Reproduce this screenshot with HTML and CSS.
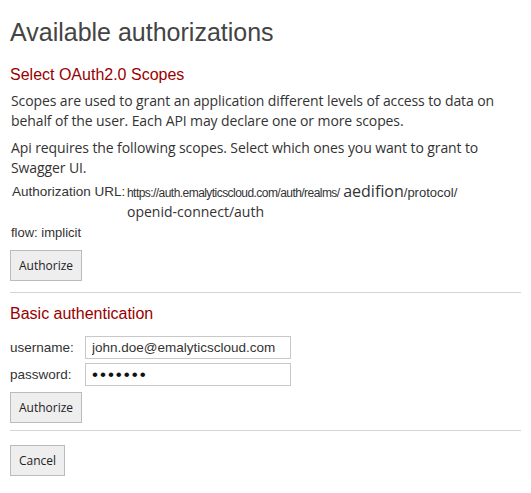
FILE: index.html
```html
<!DOCTYPE html>
<html>
<head>
<meta charset="utf-8">
<link rel="stylesheet" href="styles.css">
</head>
<body>
<div class="dialog">
  <h2 class="title">Available authorizations</h2>
  <section class="block">
    <h3 class="heading">Select OAuth2.0 Scopes</h3>
    <p class="text">Scopes are used to grant an application different levels of access to data on behalf of the user. Each API may declare one or more scopes.</p>
    <p class="text">Api requires the following scopes. Select which ones you want to grant to Swagger UI.</p>
    <div class="url-row">
      <span class="url-label">Authorization URL:</span>
      <span class="url-value"><span class="url-main">https://auth.emalyticscloud.com/auth/realms/</span> <span class="alt">aedifion</span>/protocol/<br><span class="alt alt-line">openid-connect/auth</span></span>
    </div>
    <div class="flow">flow: implicit</div>
    <button class="btn btn-oauth">Authorize</button>
  </section>
  <hr class="rule">
  <section class="block">
    <h3 class="heading heading-basic">Basic authentication</h3>
    <div class="form">
      <label class="lbl">username:</label>
      <input class="field" type="text" value="john.doe@emalyticscloud.com">
      <label class="lbl">password:</label>
      <input class="field pw" type="password" value="1234567">
    </div>
    <button class="btn btn-basic">Authorize</button>
  </section>
  <hr class="rule rule-2">
  <button class="btn btn-cancel">Cancel</button>
</div>
</body>
</html>
```
FILE: styles.css
```css
html, body {
  margin: 0;
  padding: 0;
  background: #ffffff;
}
.dialog {
  padding: 18px 10px 0 10px;
  font-family: "Liberation Sans", Arial, sans-serif;
  color: #333333;
}
.title {
  margin: 0;
  font-size: 25px;
  line-height: 29px;
  font-weight: normal;
  color: #444444;
}
.block {
  display: flex;
  flex-direction: column;
  align-items: flex-start;
}
.heading {
  margin: 18px 0 0 0;
  font-size: 16px;
  line-height: 20px;
  font-weight: normal;
  color: #990000;
}
.heading-basic {
  margin-top: 11px;
}
.text {
  margin: 6px 0 0 0;
  font-family: "Open Sans", sans-serif;
  font-size: 14px;
  letter-spacing: -0.1px;
  line-height: 20px;
  color: #333333;
  padding-left: 1px;
}
.text + .text {
  margin-top: 7px;
}
.url-row {
  display: flex;
  margin-top: 4px;
  font-size: 13.5px;
  line-height: 20px;
  padding-left: 2px;
}
.url-label {
  width: 115px;
  flex: none;
}
.url-value {
  font-size: 13px;
  line-height: 20px;
  color: #333333;
}
.url-main {
  font-size: 12px;
  letter-spacing: -0.55px;
}
.alt {
  font-family: "Open Sans", sans-serif;
  font-size: 16px;
  line-height: 18px;
}
.alt-line {
  font-size: 14px;
}
.flow {
  margin-top: 0;
  font-size: 13px;
  line-height: 20px;
  padding-left: 1px;
}
.btn {
  margin-top: 7px;
  height: 31px;
  padding: 0 8px;
  background: #eeeeee;
  border: 1px solid #bbbbbb;
  border-radius: 0;
  font-family: "Open Sans", sans-serif;
  font-size: 12px;
  color: #222222;
}
.rule {
  margin: 11px 0 0 0;
  border: 0;
  border-top: 1px solid #d5d5d5;
}
.rule-2 {
  margin-top: 7px;
}
.form {
  display: grid;
  grid-template-columns: 75px 206px;
  row-gap: 4px;
  margin-top: 12px;
  align-items: center;
}
.lbl {
  font-size: 13.5px;
  color: #333333;
}
.field {
  box-sizing: border-box;
  height: 23px;
  border: 1px solid #c8c8c8;
  padding: 0 6px;
  font-family: "Liberation Sans", Arial, sans-serif;
  font-size: 13.5px;
  color: #333333;
  margin: 0;
}
.pw {
  font-size: 17px;
  letter-spacing: 2px;
  color: #111111;
}
.btn-basic {
  margin-top: 6px;
}
.btn-cancel {
  margin-top: 14px;
}
```
